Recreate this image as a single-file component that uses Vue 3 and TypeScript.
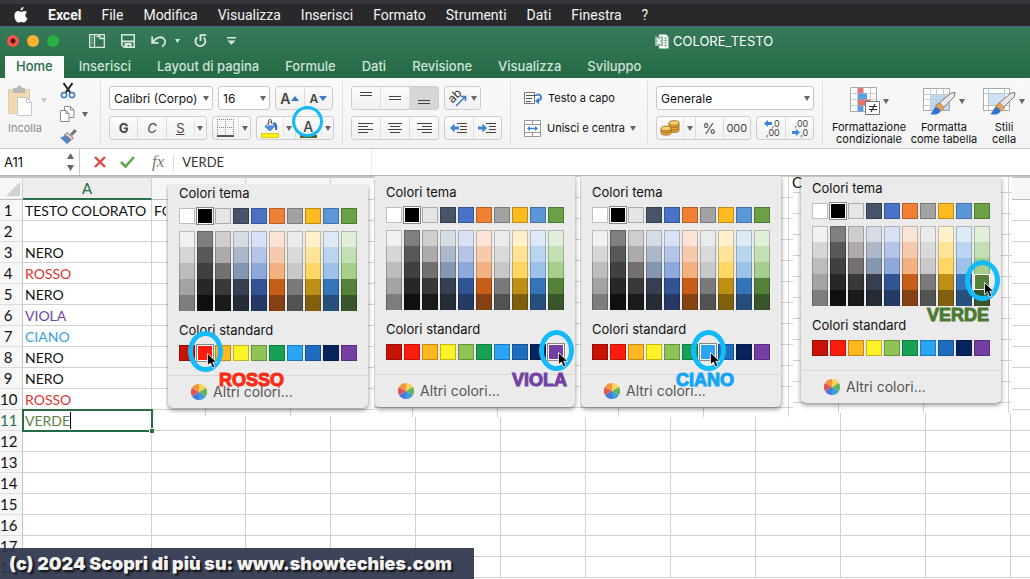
<script setup lang="ts">
import { ref } from 'vue'

interface Row {
  text: string
  tone: string
}

interface Clip {
  name: string
  label: string
  standard: number
  shade: boolean
}

const menus: string[] = ['File', 'Modifica', 'Visualizza', 'Inserisci', 'Formato', 'Strumenti', 'Dati', 'Finestra', '?']
const tabs: string[] = ['Home', 'Inserisci', 'Layout di pagina', 'Formule', 'Dati', 'Revisione', 'Visualizza', 'Sviluppo']
const columnCount = 11

const rows: Row[] = [
  { text: 'TESTO COLORATO', tone: 'black' },
  { text: '', tone: 'black' },
  { text: 'NERO', tone: 'black' },
  { text: 'ROSSO', tone: 'red' },
  { text: 'NERO', tone: 'black' },
  { text: 'VIOLA', tone: 'violet' },
  { text: 'CIANO', tone: 'cyan' },
  { text: 'NERO', tone: 'black' },
  { text: 'NERO', tone: 'black' },
  { text: 'ROSSO', tone: 'red' },
  { text: 'VERDE', tone: 'green' },
  ...Array.from({ length: 7 }, () => ({ text: '', tone: 'black' })),
]

const theme: string[] = ['#ffffff', '#000000', '#e5e5e5', '#475469', '#4a73c8', '#f08033', '#a2a2a2', '#fdbb20', '#5b97d6', '#6ba145']
const shades: string[][] = [
  ['#f1f1f1', '#d6d6d6', '#bcbcbc', '#a3a3a3', '#7d7d7d'],
  ['#7f7f7f', '#585858', '#404040', '#272727', '#0f0f0f'],
  ['#d0cdcd', '#aeaaaa', '#757070', '#3a3838', '#1a1a1a'],
  ['#d6dce5', '#acb8ca', '#8496b0', '#353f4f', '#262c36'],
  ['#d9e1f4', '#b4c5e8', '#8ea9dc', '#325494', '#253a65'],
  ['#fae4d5', '#f6cbad', '#f3b182', '#c65d18', '#834114'],
  ['#ebebeb', '#dadada', '#c8c8c8', '#7a7a7a', '#525252'],
  ['#fef1cc', '#fee398', '#fed663', '#be8f15', '#80600e'],
  ['#ddeaf6', '#bad5ef', '#9cc2e8', '#3574b7', '#26507b'],
  ['#e1eeda', '#c3dfb4', '#a6cf8c', '#55803a', '#39562a'],
]
const standard: string[] = ['#c91206', '#ff1b0d', '#ffb81f', '#fff227', '#8fc455', '#18a054', '#2aa5f5', '#1f6dc0', '#07245f', '#743ea3']

const clips: Clip[] = [
  { name: 'rosso', label: 'ROSSO', standard: 1, shade: false },
  { name: 'viola', label: 'VIOLA', standard: 9, shade: false },
  { name: 'ciano', label: 'CIANO', standard: 6, shade: false },
  { name: 'verde', label: 'VERDE', standard: -1, shade: true },
]

const cell = ref('A11')
const formula = ref('VERDE')
const font = ref('Calibri (Corpo)')
const size = ref('16')
const format = ref('Generale')
</script>

<template>
  <div class="screen">
    <nav class="menubar">
      <svg class="apple" viewBox="0 0 14 16" width="14" height="16"><path fill="#fff" d="M9.600 0c.1 1.900-1.500 3.500-3.100 3.500C6.300 1.800 8 .1 9.600 0zM12.900 5.400c-2.400 1.500-2 4.700.6 5.700-.6 1.800-2 4.500-3.600 4.500-1 0-1.400-.6-2.600-.6s-1.700.6-2.600.6C2.500 15.600.4 12 .4 9 .4 6 2.200 4.100 4.300 4.100c1.200 0 2.100.8 2.900.8.800 0 1.900-.9 3.200-.9 1 0 2 .6 2.500 1.400z" /></svg>
      <a href="#" class="app">Excel</a>
      <a v-for="m in menus" :key="m" href="#">{{ m }}</a>
    </nav>

    <header class="window">
      <div class="titlebar">
        <div class="lights">
          <button class="light close" aria-label="Chiudi"></button>
          <button class="light mini" aria-label="Riduci"></button>
          <button class="light full" aria-label="Ingrandisci"></button>
        </div>
        <div class="quick">
          <button aria-label="Modelli"><svg width="16" height="14" viewBox="0 0 16 14" fill="none" stroke="#d9ebe0" stroke-width="1.300"><path d="M.7.7h14.600v12.600H.7zM5.500.7v12.600M11 .7v3.800h4M7.500 2.500h3" /><path stroke-dasharray="1 1.500" d="M3 3v8" /></svg></button>
          <button aria-label="Salva"><svg width="14" height="14" viewBox="0 0 14 14"><path fill="none" stroke="#d9ebe0" stroke-width="1.500" d="M.8.8h12.400v12.400H3L.8 11z" /><path fill="#d9ebe0" d="M1 6.600h12v1.600H1zM3.500 9h7v5h-2v-3h-2v3h-3z" /></svg></button>
          <button aria-label="Annulla" class="undo"><svg width="16" height="13" viewBox="0 0 16 13" fill="none" stroke="#d9ebe0" stroke-width="1.800"><path d="M1.200 1.500v6.300h6.300M1.800 7.200C5 2.500 9.500 1 12.500 3.400c3 2.500 1.800 6-1.500 8.400" /></svg><svg width="5" height="4" viewBox="0 0 5 4"><path fill="#d9ebe0" d="M0 0h5L2.500 4z" /></svg></button>
          <button aria-label="Ripeti"><svg width="13" height="14" viewBox="0 0 13 14" fill="none" stroke="#d9ebe0" stroke-width="1.800"><path d="M3.400 3.200a5 5 0 1 0 6.200.2M6.500 7V1.200h5.700" /></svg></button>
          <button aria-label="Personalizza"><svg width="9" height="8" viewBox="0 0 9 8" fill="#d9ebe0"><path d="M0 0h9v1.500H0zM.5 3.500h8L4.500 7.800z" /></svg></button>
        </div>
        <div class="doc">
          <svg width="14" height="15" viewBox="0 0 14 15"><path fill="#fff" d="M4 .5h7l2.500 2.500v11.500H4z" /><path fill="none" stroke="#7fb394" stroke-width=".8" d="M8.500 4h4M8.500 6.500h4M8.500 9h4M8.500 11.500h4M10.500 3v10" /><path fill="#8fb8a0" d="M0 2.500h8v9.500H0z" /><path stroke="#fff" stroke-width="1.500" d="M2 4.500l4 5.500M6 4.500L2 10" /></svg>
          <span>COLORE_TESTO</span>
        </div>
      </div>
      <div class="tabs">
        <button v-for="(t, i) in tabs" :key="t" :class="{ active: i === 0 }">{{ t }}</button>
      </div>
    </header>

    <section class="ribbon">
      <div class="group clipboard">
        <button class="paste">
          <span class="paste-icon">
            <svg width="24" height="31" viewBox="0 0 24 31"><path fill="#efd9b4" stroke="#e3cda8" d="M.5 4.500h21v24h-21z" /><path fill="#b9b9b9" d="M5 3h4a2.500 2.500 0 0 1 5 0h3v5H5z" /><path fill="#fff" stroke="#c9c9c9" d="M9.500 12.500h9l5 5v13h-14z" /><path fill="none" stroke="#c9c9c9" d="M18.500 12.500v5h5" /></svg>
            <svg class="caret pale" width="6" height="5" viewBox="0 0 6 5"><path d="M0 0h6L3 5z" /></svg>
          </span>
          <span>Incolla</span>
        </button>
        <div class="clip-tools">
          <button aria-label="Taglia"><svg width="16" height="17" viewBox="0 0 16 17"><path stroke="#222" stroke-width="2" d="M3.500 1l7 10M12.500 1l-7 10" /><g fill="none" stroke="#3b78c3" stroke-width="1.500"><circle cx="4" cy="13" r="2.600" /><circle cx="12" cy="13" r="2.600" /></g></svg></button>
          <button aria-label="Copia" class="copy"><svg width="15" height="16" viewBox="0 0 15 16" fill="#fff" stroke="#8a8a8a"><path d="M4.500.5h6l3.500 3.500v7.500H4.500z" /><path d="M.5 4.500H6L9 7.500v8H.5z" /><path fill="none" d="M10.500.5V4H14M6 4.500v3h3" /></svg><svg class="caret" width="6" height="5" viewBox="0 0 6 5"><path d="M0 0h6L3 5z" /></svg></button>
          <button aria-label="Copia formato"><svg width="17" height="15" viewBox="0 0 17 15"><path fill="#777" d="M10 5l4.500-5L17 2.200 12 7z" /><path fill="#ddd" stroke="#777" d="M7 3.500L13.500 9l-2 2L5 5.500z" /><path fill="#4b87c8" d="M4.500 6l6.500 5.500-4 3.500L0 8.500c2 .2 3.500-1 4.500-2.500z" /><path stroke="#b45f3c" d="M4.500 6l6.500 5.500" /></svg></button>
        </div>
      </div>

      <div class="group font">
        <div class="line">
          <label class="combo family"><select v-model="font" aria-label="Tipo di carattere"><option>Calibri (Corpo)</option></select><svg class="caret" width="6" height="5" viewBox="0 0 6 5"><path d="M0 0h6L3 5z" /></svg></label>
          <label class="combo size"><select v-model="size" aria-label="Dimensione"><option>16</option></select><svg class="caret" width="6" height="5" viewBox="0 0 6 5"><path d="M0 0h6L3 5z" /></svg></label>
          <div class="buttons grow">
            <button class="big" aria-label="Aumenta dimensione">A<svg width="8" height="5" viewBox="0 0 8 5"><path fill="#3b78c3" d="M0 5h8L4 0z" /></svg></button>
            <button class="small" aria-label="Riduci dimensione">A<svg width="8" height="5" viewBox="0 0 8 5"><path fill="#3b78c3" d="M0 0h8L4 5z" /></svg></button>
          </div>
        </div>
        <div class="line">
          <div class="buttons styles">
            <button><b>G</b></button>
            <button><i>C</i></button>
            <button><u>S</u></button>
            <button class="drop" aria-label="Sottolineatura"><svg class="caret" width="6" height="5" viewBox="0 0 6 5"><path d="M0 0h6L3 5z" /></svg></button>
          </div>
          <div class="buttons borders">
            <button aria-label="Bordi"><svg width="17" height="18" viewBox="0 0 17 18" fill="none"><path stroke="#888" stroke-dasharray="1 1" d="M.5 0v16M16.500 0v16M8.500 0v16M0 .5h17M0 8.500h17" /><path stroke="#222" stroke-width="1.500" d="M0 17h17" /></svg></button>
            <button class="drop" aria-label="Altri bordi"><svg class="caret" width="6" height="5" viewBox="0 0 6 5"><path d="M0 0h6L3 5z" /></svg></button>
          </div>
          <div class="buttons fills">
            <button aria-label="Riempimento"><svg width="18" height="19" viewBox="0 0 18 19"><path fill="#fff" stroke="#666" d="M4 7.500l5-5 5 4.500-5 5z" /><path fill="none" stroke="#666" d="M7.500 6V2a1.500 1.500 0 0 1 3 0v3" /><path fill="#4a90dd" d="M3.500 7.500L9 6l5 1-5 5z" /><path fill="none" stroke="#2c6cb8" stroke-width="2" d="M12.500 4c2.500.5 3.200 2.500 2.500 7" /><path fill="#fff014" stroke="#d8cb18" d="M.5 14.500h17v4H.5z" /></svg></button>
            <button class="drop" aria-label="Altri riempimenti"><svg class="caret" width="6" height="5" viewBox="0 0 6 5"><path d="M0 0h6L3 5z" /></svg></button>
            <button class="ink">A<span class="halo"></span></button>
            <button class="drop" aria-label="Altri colori del testo"><svg class="caret" width="6" height="5" viewBox="0 0 6 5"><path d="M0 0h6L3 5z" /></svg></button>
          </div>
        </div>
      </div>

      <div class="group align">
        <div class="line">
          <div class="buttons three">
            <button aria-label="In alto"><svg width="14" height="16" viewBox="0 0 14 16" stroke="#444"><path d="M1 2.500h12M1 5.500h12" /></svg></button>
            <button aria-label="Al centro"><svg width="14" height="16" viewBox="0 0 14 16" stroke="#444"><path d="M1 6.500h12M1 9.500h12" /></svg></button>
            <button class="pressed" aria-label="In basso"><svg width="14" height="16" viewBox="0 0 14 16" stroke="#444"><path d="M1 10.500h12M1 13.500h12" /></svg></button>
          </div>
          <div class="buttons orient">
            <button aria-label="Orientamento"><svg class="slanted" width="17" height="18" viewBox="0 0 17 18"><text x="0" y="12" font-size="12" fill="#333" font-family="Inter, sans-serif" transform="rotate(-45 5 9)">ab</text><path fill="none" stroke="#3b78c3" stroke-width="1.500" d="M7 17l9-9M12 7.500h4.500V12" /></svg><svg class="caret" width="6" height="5" viewBox="0 0 6 5"><path d="M0 0h6L3 5z" /></svg></button>
          </div>
        </div>
        <div class="line">
          <div class="buttons three">
            <button aria-label="A sinistra"><svg width="16" height="12" viewBox="0 0 16 12" stroke="#444"><path d="M0 1.500h15M0 4.500h10M0 7.500h15M0 10.500h10" /></svg></button>
            <button aria-label="Centrato"><svg width="16" height="12" viewBox="0 0 16 12" stroke="#444"><path d="M1 1.500h14M3 4.500h10M1 7.500h14M3 10.500h10" /></svg></button>
            <button aria-label="A destra"><svg width="16" height="12" viewBox="0 0 16 12" stroke="#444"><path d="M1 1.500h15M6 4.500h10M1 7.500h15M6 10.500h10" /></svg></button>
          </div>
          <div class="buttons two">
            <button aria-label="Riduci rientro"><svg width="17" height="12" viewBox="0 0 17 12"><path stroke="#444" d="M7 1.500h10M10 4.500h7M10 7.500h7M7 10.500h10" /><path fill="#3b84dc" d="M0 6l4.500-4.500v3H9v3H4.500v3z" /></svg></button>
            <button aria-label="Aumenta rientro"><svg width="18" height="12" viewBox="0 0 18 12"><path stroke="#444" d="M8 1.500h10M11 4.500h7M11 7.500h7M8 10.500h10" /><path fill="#3b84dc" d="M9 6L4.500 1.500v3H0v3h4.500v3z" /></svg></button>
          </div>
        </div>
      </div>

      <div class="group wrap">
        <button class="plain"><svg width="19" height="14" viewBox="0 0 19 14" fill="none"><path fill="#fff" stroke="#777" d="M.5 1.500h10v11H.5z" /><path stroke="#555" d="M2 4.500h11M2 7.500h6M2 10.500h5" /><path stroke="#3b84dc" stroke-width="2" d="M12.500 3.500c6-1 6 6.500.5 6.500" /><path fill="#3b84dc" d="M11 10l4-3.500v7z" /></svg>Testo a capo</button>
        <button class="plain"><svg width="17" height="17" viewBox="0 0 17 17"><path fill="#fff" stroke="#999" d="M.5.500h16v16H.5zM8.500.5v4M8.500 12.500v4M.5 4.500h16M.5 12.500h16" /><path stroke="#3b84dc" stroke-width="1.500" d="M4 8.500h9" /><path fill="#3b84dc" d="M3 8.500l3-2.500v5zM14 8.500L11 6v5z" /></svg><span class="merge">Unisci e centra</span><svg class="caret" width="6" height="5" viewBox="0 0 6 5"><path d="M0 0h6L3 5z" /></svg></button>
      </div>

      <div class="group number">
        <div class="line">
          <label class="combo format"><select v-model="format" aria-label="Formato numero"><option>Generale</option></select><svg class="caret" width="6" height="5" viewBox="0 0 6 5"><path d="M0 0h6L3 5z" /></svg></label>
        </div>
        <div class="line">
          <div class="buttons money">
            <button aria-label="Valuta"><svg width="20" height="16" viewBox="0 0 20 16" stroke="#9a6414" stroke-width=".8"><g fill="#e7a63a"><path d="M9 3v8c2 2 8 2 10 0V3z" /><ellipse cx="14" cy="3" rx="5" ry="2.300" fill="#f9cf72" /><path fill="none" d="M9 6c2 2 8 2 10 0M9 8.500c2 2 8 2 10 0" /><path d="M1 8.500v5c2 2.200 8 2.200 10 0v-5z" /><ellipse cx="6" cy="8.500" rx="5" ry="2.300" fill="#f9cf72" /><path fill="none" d="M1 11c2 2 8 2 10 0" /></g></svg></button>
            <button class="drop" aria-label="Altre valute"><svg class="caret" width="6" height="5" viewBox="0 0 6 5"><path d="M0 0h6L3 5z" /></svg></button>
            <button class="percent">%</button>
            <button class="zeros">000</button>
          </div>
          <div class="buttons two decimals">
            <button aria-label="Aumenta decimali"><span><svg width="8" height="7" viewBox="0 0 8 7"><path fill="#3b84dc" d="M0 3.500L4 0v2h4v3H4v2z" /></svg>,0</span><span>,00</span></button>
            <button aria-label="Riduci decimali"><span>,00</span><span><svg width="8" height="7" viewBox="0 0 8 7"><path fill="#3b84dc" d="M8 3.500L4 0v2H0v3h4v2z" /></svg>,0</span></button>
          </div>
        </div>
      </div>

      <div class="group cells">
        <button class="tall conditional">
          <span class="art"><svg width="31" height="28" viewBox="0 0 31 28"><path fill="#fff" stroke="#aaa" d="M.5.500h26v24H.5z" /><path stroke="#ccc" d="M7.500 1v23M13.500 1v23M20.500 1v23M1 6.500h25M1 12.500h25M1 18.500h25" /><path fill="#e9736d" d="M8 1h5v5.500H8zM8 12.500h12v6H8z" /><path fill="#5b9fe4" d="M8 6.500h9v6H8zM8 18.500h5v6H8z" /><path fill="#fff" stroke="#777" d="M15.500 14.500h14v13h-14z" /><path stroke="#333" stroke-width="1.200" d="M19 19.500h8M19 22.500h8M25 17l-4 8" /></svg><svg class="caret" width="6" height="5" viewBox="0 0 6 5"><path d="M0 0h6L3 5z" /></svg></span>
          <span>Formattazione<br />condizionale</span>
        </button>
        <button class="tall table">
          <span class="art"><svg width="34" height="28" viewBox="0 0 34 28"><path fill="#fff" stroke="#aaa" d="M.5 1.500h26v22H.5z" /><path fill="#bcd8f2" d="M7 7h19v16H7z" /><path stroke="#c4cdd6" d="M7.500 2v21M13.500 2v21M20.500 2v21M1 7.500h25M1 12.500h25M1 18.500h25" /><path fill="#e8e8e8" stroke="#777" d="M15 17L28 6l4-.5-.5 4L20 21z" /><path fill="#e3a457" stroke="#a87431" stroke-width=".6" d="M13 18l4-2 4 4-2 4c-4 1-7-3-6-6z" /><path fill="#2f72cf" d="M7 27c3-1 3-6 6-7 3 1 5 3 4 5-2 3-6 3-10 2z" /></svg><svg class="caret" width="6" height="5" viewBox="0 0 6 5"><path d="M0 0h6L3 5z" /></svg></span>
          <span>Formatta<br />come tabella</span>
        </button>
        <button class="tall styles-cell">
          <span class="art"><svg width="34" height="28" viewBox="0 0 34 28"><path fill="#fff" stroke="#aaa" d="M.5 1.500h26v22H.5z" /><path fill="#cfe2f5" d="M6 6h15v12H6z" /><path stroke="#b5c4d2" fill="none" d="M5.500 2v21M21.500 2v21M1 6.500h25M1 18.500h25" /><path fill="#e8e8e8" stroke="#777" d="M15 17L28 6l4-.5-.5 4L20 21z" /><path fill="#e3a457" stroke="#a87431" stroke-width=".6" d="M13 18l4-2 4 4-2 4c-4 1-7-3-6-6z" /><path fill="#2f72cf" d="M7 27c3-1 3-6 6-7 3 1 5 3 4 5-2 3-6 3-10 2z" /></svg><svg class="caret" width="6" height="5" viewBox="0 0 6 5"><path d="M0 0h6L3 5z" /></svg></span>
          <span>Stili<br />cella</span>
        </button>
      </div>
    </section>

    <div class="formula-bar">
      <label class="name-box"><input v-model="cell" aria-label="Casella nome" /><svg width="7" height="18" viewBox="0 0 7 18" fill="#666"><path d="M0 6h7L3.500 0zM0 12h7l-3.500 6z" /></svg></label>
      <button aria-label="Annulla immissione"><svg width="12" height="12" viewBox="0 0 12 12"><path stroke="#dc4a44" stroke-width="2.400" d="M1 1l10 10M11 1L1 11" /></svg></button>
      <button aria-label="Conferma"><svg width="15" height="12" viewBox="0 0 15 12" fill="none"><path stroke="#5fa84f" stroke-width="2.600" d="M1 6l4.500 4.500L14 1" /></svg></button>
      <button class="fx">fx</button>
      <input v-model="formula" class="formula" aria-label="Formula" />
      <span class="rule"></span>
    </div>

    <main class="sheet">
      <table>
        <colgroup>
          <col class="c-head" />
          <col class="c-a" />
          <col class="c-b" />
          <col v-for="n in columnCount - 1" :key="n" class="c-n" />
        </colgroup>
        <thead>
          <tr>
            <th class="corner"><svg width="14" height="14" viewBox="0 0 14 14"><path fill="#d2d2d2" d="M14 0v14H0z" /></svg></th>
            <th class="chosen">A</th>
            <th v-for="n in columnCount" :key="n"></th>
          </tr>
        </thead>
        <tbody>
          <tr v-for="(r, i) in rows" :key="i">
            <th :class="{ current: i === 10 }">{{ i + 1 }}</th>
            <td :class="[r.tone, { editing: i === 10 }]"><span>{{ r.text }}</span><i v-if="i === 10" class="handle"></i></td>
            <td v-for="n in columnCount" :key="n">{{ i === 0 && n === 1 ? 'FO' : '' }}</td>
          </tr>
        </tbody>
      </table>

      <section v-for="k in clips" :key="k.name" class="clip" :class="k.name">
        <div class="palette">
          <h2>Colori tema</h2>
          <div class="swatches">
            <button v-for="(c, i) in theme" :key="c" class="swatch" :class="{ picked: i === 1 }" :style="{ backgroundColor: c }" :aria-label="c"></button>
          </div>
          <div class="swatches shades">
            <div v-for="(s, i) in shades" :key="i" class="stack">
              <button v-for="(c, j) in s" :key="c" :style="{ backgroundColor: c }" :class="{ hover: k.shade && i === 9 && j === 3 }" :aria-label="c">
                <span v-if="k.shade && i === 9 && j === 3" class="ring"></span>
                <svg v-if="k.shade && i === 9 && j === 3" class="pointer" width="11" height="16" viewBox="0 0 11 16"><path fill="#000" stroke="#fff" stroke-width=".8" d="M.5.500v12l3-2.500 2 5 2.300-1-2-4.700h4z" /></svg>
              </button>
            </div>
          </div>
          <h2 class="second">Colori standard</h2>
          <div class="swatches">
            <button v-for="(c, i) in standard" :key="c" class="swatch" :class="{ picked: i === k.standard }" :style="{ backgroundColor: c }" :aria-label="c">
              <span v-if="i === k.standard" class="ring"></span>
              <svg v-if="i === k.standard" class="pointer" width="11" height="16" viewBox="0 0 11 16"><path fill="#000" stroke="#fff" stroke-width=".8" d="M.5.500v12l3-2.500 2 5 2.300-1-2-4.700h4z" /></svg>
            </button>
          </div>
          <button class="more">
            <svg width="16" height="16" viewBox="-8 -8 16 16"><path fill="#fcd35b" d="M0 0V-8A8 8 0 0 1 7-4z" /><path fill="#67b552" d="M0 0l7-4A8 8 0 0 1 7 4z" /><path fill="#3f9edb" d="M0 0l7 4A8 8 0 0 1 0 8z" /><path fill="#4a79d8" d="M0 0v8a8 8 0 0 1-7-4z" /><path fill="#e2574f" d="M0 0l-7 4a8 8 0 0 1 0-8z" /><path fill="#f3953f" d="M0 0l-7-4a8 8 0 0 1 7-4z" /></svg>
            Altri colori...
          </button>
        </div>
        <strong class="tag">{{ k.label }}</strong>
      </section>
      <span class="stray">C</span>

      <footer class="banner">(c) 2024 Scopri di più su: www.showtechies.com</footer>
    </main>
  </div>
</template>

<style>
body {
  margin: 0;
  overflow: hidden;
}
</style>

<style scoped>
.screen {
  display: flex;
  flex-direction: column;
  height: 100vh;
  overflow: hidden;
  background: #fff;
  color: #111;
  font-family: Inter, "Liberation Sans", sans-serif;
  font-size: 13px;
}
* {
  box-sizing: border-box;
}
button,
input,
select {
  margin: 0;
  padding: 0;
  border: 0;
  outline: 0;
  background: none;
  color: inherit;
  font: inherit;
}
svg {
  display: block;
  flex: none;
}
.caret {
  fill: #666;
}
.caret.pale {
  fill: #c4c4c4;
}

.menubar {
  display: flex;
  flex: none;
  align-items: center;
  gap: 20px;
  height: 27px;
  padding: 4px 0 0 14px;
  border-bottom: 1px solid #3f5f87;
  background: linear-gradient(#37383e 4px, #29292b 4px);
  font-family: Roboto, sans-serif;
  font-size: 14px;
}
.menubar a {
  color: #f4f4f4;
  text-decoration: none;
}
.menubar .app {
  font-weight: 700;
}

.window {
  flex: none;
  background: linear-gradient(#37795a, #256b45);
}
.titlebar {
  display: flex;
  align-items: center;
  height: 29px;
  padding: 0 0 1px 7px;
}
.lights {
  display: flex;
  gap: 8px;
}
.light {
  width: 12px;
  height: 12px;
  border-radius: 50%;
}
.close {
  background: radial-gradient(#5a0d0a 2px, #f0564d 3px);
}
.mini {
  background: #fbb32f;
}
.full {
  background: #29b043;
}
.quick {
  display: flex;
  align-items: center;
  margin-left: 30px;
}
.quick button {
  display: flex;
  align-items: center;
  gap: 8px;
  margin-right: 16px;
}
.quick button:nth-child(3) {
  margin-right: 14px;
}
.quick button:nth-child(4) {
  margin-right: 20px;
}
.doc {
  display: flex;
  align-items: center;
  gap: 4px;
  margin-left: 403px;
  color: #fff;
}
.tabs {
  display: flex;
  height: 22px;
  padding-left: 5px;
}
.tabs button {
  padding: 0 13px 2px;
  color: #cfe3d7;
  font-weight: 500;
}
.tabs .active {
  margin-right: 2px;
  padding: 0 11px 2px;
  background: #fafafa;
  color: #256b45;
}

.ribbon {
  display: flex;
  flex: none;
  height: 71px;
  padding: 3px 0;
  border-bottom: 1px solid #c8c8c8;
  background: linear-gradient(#f9f9f9, #f3f3f3);
  font-size: 12px;
}
.group {
  display: flex;
  flex: none;
  flex-direction: column;
  gap: 6px;
  padding: 5px 8px;
  border-right: 1px solid #dedede;
}
.line {
  display: flex;
  gap: 5px;
}
.combo {
  display: grid;
  grid-template-columns: 1fr 13px;
  align-items: center;
  justify-items: center;
  height: 24px;
  border: 1px solid #c6c6c6;
  border-radius: 3px;
  background: #fff;
}
.combo select {
  grid-area: 1 / 1 / 2 / 3;
  width: 100%;
  padding-left: 4px;
  appearance: none;
}
.combo .caret {
  grid-area: 1 / 2;
  pointer-events: none;
}
.family {
  width: 104px;
}
.size {
  width: 52px;
}
.format {
  width: 158px;
}
.buttons {
  display: flex;
  height: 24px;
  border: 1px solid #cdcdcd;
  border-radius: 3px;
  background: linear-gradient(#fbfbfb, #f1f1f1);
}
.buttons button {
  display: flex;
  flex: 1;
  align-items: center;
  justify-content: center;
  border-left: 1px solid #dcdcdc;
  color: #444;
}
.buttons button:first-child {
  border-left: 0;
}
.buttons .drop {
  flex: 0 0 12px;
  border-left-color: #e6e6e6;
}
.grow {
  width: 58px;
}
.grow button {
  gap: 1px;
  font-weight: 600;
}
.grow .big {
  font-size: 14px;
}
.grow .small {
  font-size: 12px;
}
.styles {
  width: 98px;
  font-size: 13px;
}
.borders {
  width: 39px;
}
.fills {
  width: 78px;
}
.buttons .ink {
  position: relative;
  padding-bottom: 4px;
  font-size: 14px;
  font-weight: 500;
}
.ink::after {
  position: absolute;
  bottom: 1px;
  left: 4px;
  width: 17px;
  height: 3px;
  background: #58611c;
  content: "";
}
.halo {
  position: absolute;
  z-index: 1;
  top: -11px;
  left: -4px;
  width: 31px;
  height: 31px;
  border: 3px solid #13bbfa;
  border-radius: 50%;
}
.three {
  width: 88px;
}
.buttons .pressed {
  background: #d6d6d6;
}
.orient {
  width: 37px;
}
.orient button {
  gap: 5px;
}
.slanted {
  overflow: visible;
}
.two {
  width: 58px;
}
.clipboard {
  flex-direction: row;
  width: 101px;
  padding: 1px 0 0 8px;
}
.paste {
  display: flex;
  flex-direction: column;
  align-items: flex-start;
  gap: 5px;
  width: 46px;
  padding-top: 3px;
  color: #8b8b8b;
  font-size: 11px;
}
.paste-icon {
  display: flex;
  align-items: center;
  gap: 9px;
}
.clip-tools {
  display: flex;
  flex-direction: column;
  align-items: flex-start;
  gap: 7px;
}
.copy {
  display: flex;
  align-items: center;
  gap: 7px;
}
.wrap {
  width: 137px;
  padding-left: 13px;
}
.plain {
  display: flex;
  align-items: center;
  gap: 5px;
  height: 24px;
  font-size: 11px;
  white-space: nowrap;
}
.merge {
  margin-left: 1px;
}
.money {
  width: 95px;
}
.decimals {
  width: 58px;
}
.decimals button {
  flex-direction: column;
  font-size: 9px;
  line-height: 9px;
}
.decimals span {
  display: flex;
  align-items: center;
  justify-content: flex-end;
  width: 18px;
}
.percent {
  font-size: 14px;
}
.zeros {
  font-size: 11px;
}
.cells {
  flex: 1;
  flex-direction: row;
  gap: 0;
  padding: 6px 0 0 6px;
  border: 0;
}
.tall {
  display: flex;
  flex: none;
  flex-direction: column;
  align-items: center;
  gap: 6px;
  font-size: 11px;
  line-height: 12px;
}
.art {
  display: flex;
  align-items: center;
  gap: 2px;
}
.conditional {
  width: 80px;
}
.table {
  width: 70px;
}
.styles-cell {
  width: 50px;
}

.formula-bar {
  display: flex;
  flex: none;
  align-items: center;
  height: 27px;
  border-bottom: 1px solid #b4b4b4;
}
.name-box {
  display: flex;
  align-items: center;
  align-self: stretch;
  width: 80px;
  padding: 0 5px 0 4px;
  border-right: 1px solid #c8c8c8;
}
.name-box input {
  flex: 1;
  min-width: 0;
}
.formula-bar button {
  margin-left: 14px;
}
.formula-bar .fx {
  margin-left: 17px;
  color: #777;
  font-family: "Liberation Serif", serif;
  font-size: 17px;
  font-style: italic;
}
.formula {
  width: 198px;
  margin-left: 9px;
  padding-left: 8px;
  border-left: 1px solid #dcdcdc;
  color: #333;
  font-family: Lato, sans-serif;
  font-size: 13px;
}
.rule {
  align-self: stretch;
  width: 1px;
  background: #ececec;
}

.sheet {
  position: relative;
  flex: 1;
  min-height: 0;
  overflow: hidden;
  font-family: Lato, sans-serif;
}
table {
  width: 1096px;
  border-spacing: 0;
  table-layout: fixed;
  font-size: 15px;
}
.c-head {
  width: 23px;
}
.c-a {
  width: 129px;
}
.c-b {
  width: 94px;
}
.c-n {
  width: 85px;
}
thead th {
  height: 24px;
  padding: 0;
  border-top: 2px solid #c4c4c4;
  border-right: 1px solid #d0d0d0;
  border-bottom: 1px solid #b8b8b8;
  background: #f6f6f6;
  font-weight: 400;
}
.corner svg {
  margin-left: 6px;
}
thead .chosen {
  border-bottom: 2px solid #2a7049;
  background: #ededed;
  color: #256b45;
}
tbody th {
  height: 21px;
  padding: 0 6px 0 0;
  border-right: 1px solid #c4c4c4;
  border-bottom: 1px solid #dcdcdc;
  background: #f7f7f7;
  font-weight: 400;
  line-height: 20px;
}
tbody .current {
  border-right-color: #256b45;
  color: #256b45;
}
td {
  height: 21px;
  padding: 1px 2px 0;
  border-right: 1px solid #d0d0d0;
  border-bottom: 1px solid #d0d0d0;
  font-size: 14px;
  line-height: 19px;
  white-space: nowrap;
}
.red {
  color: #e03230;
}
.violet {
  color: #6b43a0;
}
.cyan {
  color: #37a3dc;
}
.green {
  color: #5b8140;
}
.editing {
  position: relative;
  outline: 2px solid #256b45;
  outline-offset: -1px;
}
.editing span {
  border-right: 1px solid #000;
}
.handle {
  position: absolute;
  right: -3px;
  bottom: -3px;
  width: 5px;
  height: 5px;
  border: 1px solid #fff;
  border-right: 0;
  border-bottom: 0;
  background: #256b45;
}

.clip {
  position: absolute;
  overflow: hidden;
  background:
    linear-gradient(#d2d2d2 1px, transparent 1px) 0 var(--row) / 100% 21px,
    linear-gradient(90deg, #d2d2d2 1px, transparent 1px) var(--col) 0 / 85px 100%,
    #fff;
}
.rosso {
  --row: 15px;
  --col: 39px;
  top: 8px;
  left: 166px;
  width: 208px;
  height: 232px;
  padding-left: 2px;
}
.viola {
  --row: 0;
  --col: 38px;
  top: 0;
  left: 374px;
  width: 206px;
  height: 241px;
  padding-left: 1px;
}
.ciano {
  --row: 0;
  --col: 38px;
  top: 0;
  left: 580px;
  width: 213px;
  height: 241px;
  padding-left: 1px;
}
.verde {
  --row: 15px;
  --col: 45px;
  top: 1px;
  left: 793px;
  width: 219px;
  height: 236px;
  padding-left: 8px;
}
.palette {
  width: 200px;
  padding: 1px 11px 0;
  border-radius: 0 0 5px 5px;
  background: #ebebeb;
  box-shadow: 0 2px 5px rgba(0, 0, 0, 0.45);
  font-family: Inter, sans-serif;
}
.viola .palette,
.ciano .palette {
  padding-top: 8px;
}
.verde .palette {
  padding-top: 3px;
}
h2 {
  margin: 0 0 7px;
  font-size: 13px;
  font-weight: 400;
  line-height: 16px;
}
.second {
  margin-top: 11px;
}
.swatches {
  display: flex;
  gap: 2px;
}
.swatch {
  position: relative;
  width: 16px;
  height: 16px;
  border: 1px solid rgba(0, 0, 0, 0.25);
}
.swatch.picked {
  border: 1px solid #fff;
  outline: 1px solid #888;
}
.shades {
  margin-top: 7px;
}
.stack {
  display: flex;
  flex-direction: column;
  width: 16px;
}
.stack button {
  position: relative;
  height: 16px;
  border: solid rgba(0, 0, 0, 0.22);
  border-width: 0 1px;
}
.stack button:first-child {
  border-top-width: 1px;
}
.stack .hover {
  border: 1px solid #fff;
}
.ring {
  position: absolute;
  z-index: 1;
  top: -15px;
  left: -10px;
  width: 35px;
  height: 41px;
  border: 5px solid #13bbfa;
  border-radius: 50%;
}
.pointer {
  position: absolute;
  z-index: 2;
  top: 7px;
  left: 9px;
}
.more {
  display: flex;
  align-items: center;
  gap: 6px;
  width: 200px;
  height: 33px;
  margin: 14px -11px 0;
  padding: 0 0 1px 23px;
  border-top: 1px solid #d8d8d8;
  color: #555;
  font-size: 14px;
}
.tag {
  position: absolute;
  z-index: 3;
  font-family: "Liberation Sans", Arial, sans-serif;
  font-size: 18px;
  line-height: 20px;
  -webkit-text-stroke: 1px currentColor;
}
.rosso .tag {
  top: 186px;
  left: 53px;
  color: #ff2a12;
}
.viola .tag {
  top: 194px;
  left: 138px;
  color: #7340a4;
}
.ciano .tag {
  top: 194px;
  left: 96px;
  color: #13a5f5;
}
.verde .tag {
  top: 128px;
  left: 134px;
  color: #4d7a33;
}
.stray {
  position: absolute;
  top: -3px;
  left: 792px;
  font-size: 15px;
}
.banner {
  position: absolute;
  bottom: 0;
  left: 0;
  padding: 0 22px 0 9px;
  background: rgba(44, 52, 76, 0.92);
  color: #f2f2f2;
  font-family: Inter, sans-serif;
  font-size: 18px;
  font-weight: 900;
  line-height: 31px;
  text-shadow: 2px 2px 2px #111;
}
</style>
